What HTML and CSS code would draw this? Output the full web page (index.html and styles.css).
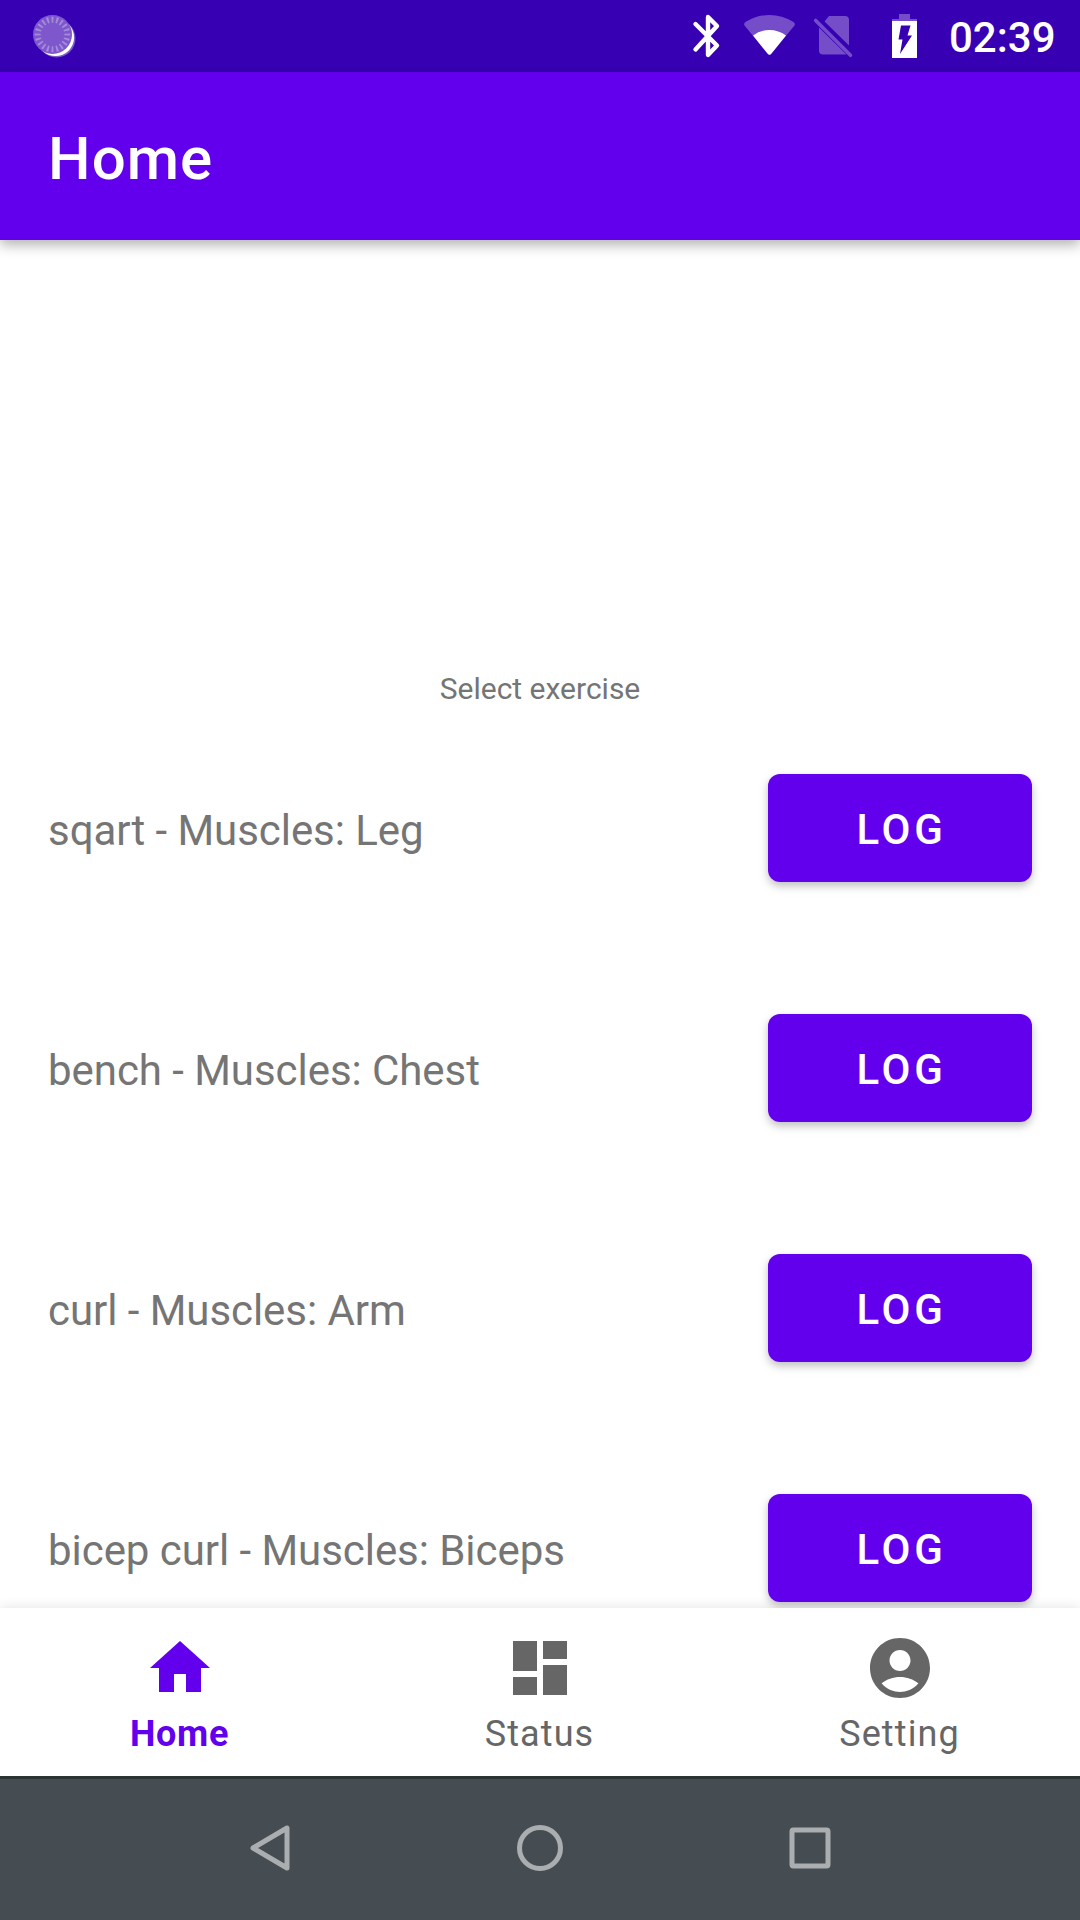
FILE: index.html
```html
<!DOCTYPE html>
<html lang="en">
<head>
<meta charset="utf-8">
<title>Home</title>
<link rel="stylesheet" href="styles.css">
</head>
<body>
<div class="screen">
  <div class="status-bar">
    <svg class="spinner" width="46" height="46" viewBox="0 0 46 46">
      <circle cx="25.500" cy="25.500" r="19" fill="#fff" opacity=".35"/>
      <circle cx="24.500" cy="24.500" r="18.600" fill="#fff"/>
      <circle cx="21.500" cy="21.500" r="19.500" fill="#7e57cc"/>
      <circle cx="21.500" cy="21.500" r="14.800" fill="none" stroke="#a68bdc" stroke-width="6" pathLength="80" stroke-dasharray="1.600 2.400" stroke-dashoffset=".8"/>
    </svg>
    <div class="status-icons">
      <svg width="30" height="48" viewBox="0 0 30 48" fill="none" stroke="#fff" stroke-width="4.400" stroke-linecap="round" stroke-linejoin="round">
        <path d="M3.500 12 25 33.500 16 43V5l9 9L3.500 37.500"/>
      </svg>
      <svg width="54" height="48" viewBox="0 0 54 48">
        <path fill="#754dc9" d="M1.500 13.500Q.500 11.500 2.500 10Q14 3 26.500 3T50.500 10Q52.500 11.500 51.500 13.500L28.500 41.500Q26.500 44 24.500 41.500Z"/>
        <path fill="#fff" d="M10 23.500Q17.500 18 26.500 18T43 23.500L28.500 41.500Q26.500 44 24.500 41.500Z"/>
      </svg>
      <svg width="42" height="48" viewBox="0 0 42 48">
        <path fill="#754dc9" d="M12.500 9.500 17 4H33Q37 4 37 8V33.500ZM7 15.500 34.500 42.500H11Q7 42.500 7 38.500Z"/>
        <path stroke="#754dc9" stroke-width="3.600" stroke-linecap="round" d="M3.700 8.500 38.500 43.300"/>
      </svg>
      <svg width="26" height="48" viewBox="0 0 26 48">
        <path fill="#754dc9" d="M7 2H18V7H25V9H0V7H7Z"/>
        <path fill="#fff" fill-rule="evenodd" d="M0 9H25V46H0ZM9 13.500H18.500L15.500 23.500H20L8 42 10.500 27.500H6.500Z"/>
      </svg>
    </div>
    <span class="clock">02:39</span>
  </div>
  <header class="app-bar">Home</header>
  <main class="content">
    <p class="hint">Select exercise</p>
    <div class="exercises">
      <div class="exercise"><span>sqart - Muscles: Leg</span><button class="log">LOG</button></div>
      <div class="exercise"><span>bench - Muscles: Chest</span><button class="log">LOG</button></div>
      <div class="exercise"><span>curl - Muscles: Arm</span><button class="log">LOG</button></div>
      <div class="exercise"><span>bicep curl - Muscles: Biceps</span><button class="log">LOG</button></div>
    </div>
  </main>
  <nav class="tabs">
    <a class="tab active">
      <svg width="72" height="72" viewBox="0 0 24 24"><path d="M10 20v-6h4v6h5v-8h3L12 3 2 12h3v8z"/></svg>
      <span>Home</span>
    </a>
    <a class="tab">
      <svg width="72" height="72" viewBox="0 0 24 24"><path d="M3 13h8V3H3v10zm0 8h8v-6H3v6zm10 0h8V11h-8v10zm0-18v6h8V3h-8z"/></svg>
      <span>Status</span>
    </a>
    <a class="tab">
      <svg width="72" height="72" viewBox="0 0 24 24"><path d="M12 2C6.480 2 2 6.480 2 12s4.480 10 10 10 10-4.480 10-10S17.520 2 12 2zm0 4c1.930 0 3.500 1.570 3.500 3.500S13.930 13 12 13s-3.500-1.570-3.500-3.500S10.070 6 12 6zm0 14c-2.030 0-4.430-.820-6.140-2.880C7.550 15.800 9.680 15 12 15s4.450.800 6.140 2.120C16.430 19.180 14.030 20 12 20z"/></svg>
      <span>Setting</span>
    </a>
  </nav>
  <div class="system-nav">
    <svg width="60" height="60" viewBox="0 0 60 60"><path d="M47 10v40L13 30z"/></svg>
    <svg width="60" height="60" viewBox="0 0 60 60"><circle cx="30" cy="30" r="20.500"/></svg>
    <svg width="60" height="60" viewBox="0 0 60 60"><rect x="12" y="12" width="36" height="36" rx="1.500"/></svg>
  </div>
</div>
</body>
</html>
```
FILE: styles.css
```css
* { box-sizing: border-box; }

body {
  margin: 0;
  background: #fff;
  font-family: Roboto, sans-serif;
}

.screen {
  display: flex;
  flex-direction: column;
  width: 1080px;
  height: 1920px;
  overflow: hidden;
}

.status-bar {
  display: flex;
  align-items: center;
  height: 72px;
  padding: 0 25px 0 31px;
  background: #3700b3;
  color: #fff;
}

.spinner { margin-top: -1px; }

.status-icons {
  display: grid;
  grid-template-columns: 30px 54px 42px 26px;
  column-gap: 21px;
  margin-left: auto;
}

.status-icons svg:nth-child(3) { margin-left: -6px; }
.status-icons svg:nth-child(4) { margin-left: 11px; }

.clock {
  width: 106px;
  margin-left: 42px;
  padding-top: 3px;
  font-size: 42px;
  font-weight: 500;
  line-height: 69px;
  white-space: nowrap;
}

.app-bar {
  z-index: 1;
  height: 168px;
  padding: 3px 48px 0;
  background: #6200ee;
  box-shadow: 0 5px 12px rgba(0, 0, 0, .3);
  color: #fff;
  font-size: 60px;
  font-weight: 500;
  letter-spacing: .018em;
  line-height: 168px;
}

.content {
  flex: 1;
  min-height: 0;
  overflow: hidden;
  color: #757575;
}

.hint {
  height: 40px;
  margin: 428px 0 0;
  padding-top: 1px;
  font-size: 30px;
  line-height: 40px;
  text-align: center;
}

.exercises { padding: 0 48px; }

.exercise {
  display: flex;
  align-items: center;
  justify-content: space-between;
  height: 240px;
  font-size: 42px;
  letter-spacing: -.05px;
}

.exercise span { padding-top: 4px; }

.log {
  width: 264px;
  height: 108px;
  padding: 3px 0 0 3px;
  border: 0;
  border-radius: 12px;
  background: #6200ee;
  box-shadow: 0 4px 8px rgba(0, 0, 0, .25);
  color: #fff;
  font: 500 42px Roboto, sans-serif;
  letter-spacing: .0893em;
}

.tabs {
  z-index: 1;
  display: grid;
  grid-template-columns: repeat(3, 1fr);
  height: 168px;
  background: #fff;
  box-shadow: 0 0 12px rgba(0, 0, 0, .12);
}

.tab {
  display: flex;
  flex-direction: column;
  align-items: center;
  padding-top: 24px;
  color: #666;
  fill: currentColor;
  font-size: 36px;
  letter-spacing: .031em;
  line-height: 42px;
}

.tab span {
  margin-top: 9px;
  padding-right: 1px;
}

.active {
  color: #6200ee;
  font-weight: 700;
  letter-spacing: .018em;
}

.system-nav {
  z-index: 2;
  display: flex;
  justify-content: center;
  gap: 210px;
  height: 144px;
  padding-top: 39px;
  border-top: 3px solid #2c3333;
  background: #454d52;
  fill: none;
  stroke: #abaeb0;
  stroke-width: 5px;
  stroke-linejoin: round;
}
```
